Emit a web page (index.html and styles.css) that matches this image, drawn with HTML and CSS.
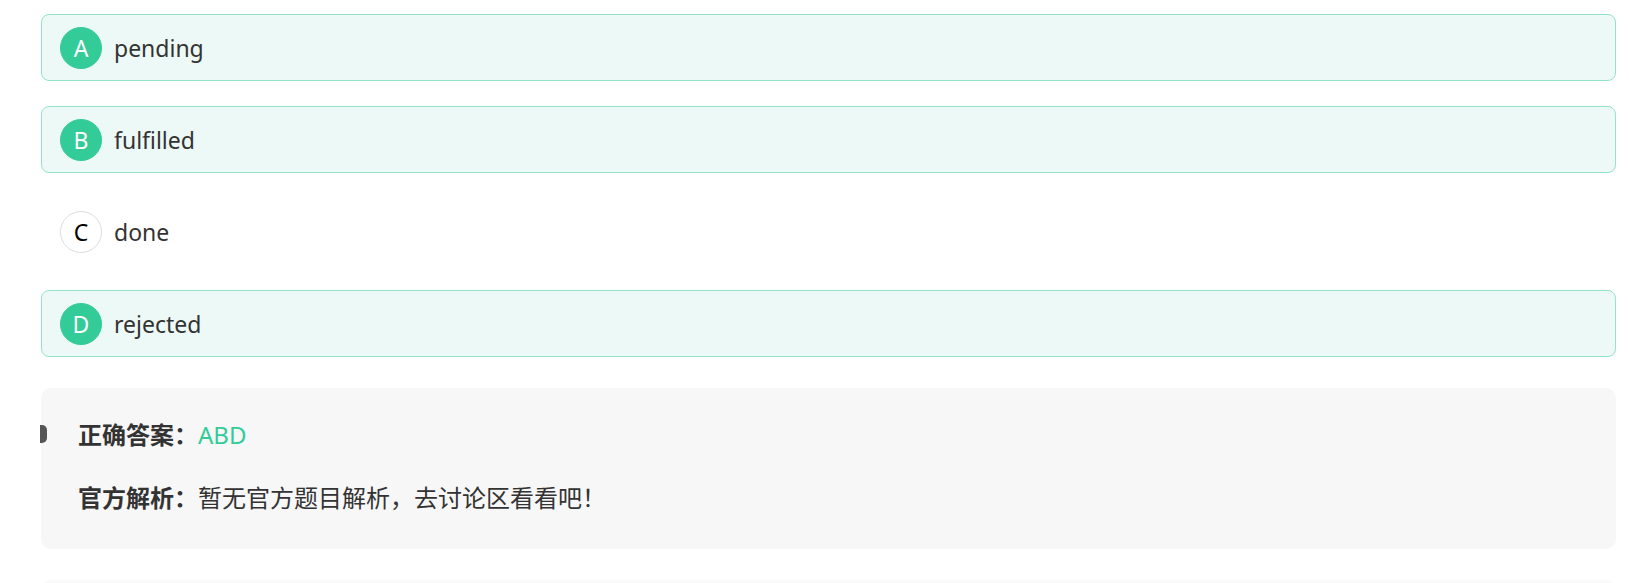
FILE: index.html
```html
<!DOCTYPE html>
<html>
<head>
  <meta charset="UTF-8">
  <title>题目详情</title>
  <link rel="stylesheet" href="styles.css">
</head>
<body>
  <div class="question">
    <ul class="options">
      <li class="option selected"><span class="letter">A</span><span class="text">pending</span></li>
      <li class="option selected"><span class="letter">B</span><span class="text">fulfilled</span></li>
      <li class="option"><span class="letter">C</span><span class="text">done</span></li>
      <li class="option selected"><span class="letter">D</span><span class="text">rejected</span></li>
    </ul>

    <div class="analysis">
      <span class="marker"></span>
      <p class="line"><span class="label">正确答案：</span><span class="answer">ABD</span></p>
      <p class="line"><span class="label">官方解析：</span>暂无官方题目解析，去讨论区看看吧！</p>
    </div>

    <div class="next-block"></div>
  </div>
</body>
</html>
```

FILE: styles.css
```css
body {
  margin: 0;
  font-family: "Noto Sans", "Noto Sans CJK SC", sans-serif;
  color: #333;
  background: #fff;
}
.question {
  padding: 14px 13px 0 41px;
}
.options {
  list-style: none;
  margin: 0;
  padding: 0;
}
.option {
  display: flex;
  align-items: center;
  height: 65px;
  margin-bottom: 25px;
  padding: 0 18px;
  border: 1px solid transparent;
  border-radius: 8px;
}
.option.selected {
  background-color: #edf9f6;
  border-color: #94e3c6;
}
.letter {
  display: flex;
  align-items: center;
  justify-content: center;
  width: 40px;
  height: 40px;
  margin-right: 12px;
  border: 1px solid #ddd;
  border-radius: 50%;
  font-size: 23px;
  color: #000;
  background: #fff;
}
.option.selected .letter {
  background-color: #33cc99;
  border-color: #33cc99;
  color: #fff;
}
.text {
  font-size: 23px;
  color: #333;
}
.analysis {
  position: relative;
  margin-top: 31px;
  padding: 24px 37px 28px;
  background-color: #f7f7f7;
  border-radius: 10px;
}
.marker {
  position: absolute;
  left: -1px;
  top: 37px;
  width: 7px;
  height: 18px;
  background-color: #555;
  border-radius: 0 5px 5px 0;
}
.line {
  margin: 0;
  line-height: 46px;
  font-size: 24px;
  color: #333;
}
.line + .line {
  margin-top: 17px;
}
.label {
  font-weight: bold;
}
.answer {
  color: #33cc99;
}
.next-block {
  height: 40px;
  margin-top: 31px;
  background-color: #fafafa;
  border-radius: 10px 10px 0 0;
}
```
